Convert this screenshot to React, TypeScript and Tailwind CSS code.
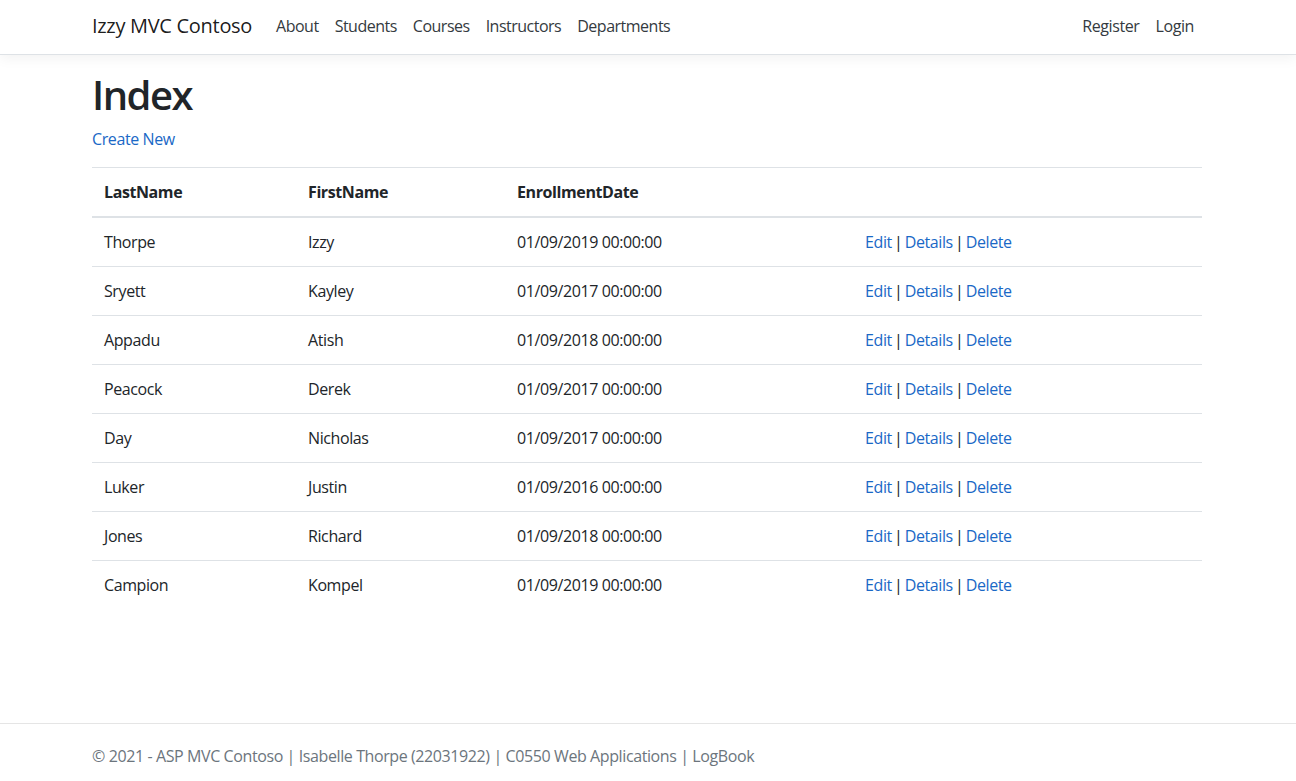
const students = [
  { last: "Thorpe", first: "Izzy", date: "01/09/2019 00:00:00" },
  { last: "Sryett", first: "Kayley", date: "01/09/2017 00:00:00" },
  { last: "Appadu", first: "Atish", date: "01/09/2018 00:00:00" },
  { last: "Peacock", first: "Derek", date: "01/09/2017 00:00:00" },
  { last: "Day", first: "Nicholas", date: "01/09/2017 00:00:00" },
  { last: "Luker", first: "Justin", date: "01/09/2016 00:00:00" },
  { last: "Jones", first: "Richard", date: "01/09/2018 00:00:00" },
  { last: "Campion", first: "Kompel", date: "01/09/2019 00:00:00" },
];

const navLinks = ["About", "Students", "Courses", "Instructors", "Departments"];

export default function App() {
  return (
    <div
      className="min-h-screen flex flex-col bg-white text-[#212529] text-[16px] leading-6 tracking-[-0.4px]"
      style={{ fontFamily: '"Open Sans", "Noto Sans", sans-serif' }}
    >
      <header className="h-[55px] border-b border-[#dee2e6] bg-white shadow-[0_4px_12px_rgba(0,0,0,0.05)]">
        <div className="w-[1112px] pr-[2px] mx-auto h-full flex items-center pb-0.5">
          <a className="text-[20px] text-black/90 mr-4 tracking-[-0.3px]">Izzy MVC Contoso</a>
          <nav className="flex flex-1">
            {navLinks.map((l) => (
              <a key={l} className="px-2 text-[#343a40] tracking-[-0.5px]">{l}</a>
            ))}
          </nav>
          <nav className="flex">
            <a className="px-2 text-[#343a40]">Register</a>
            <a className="px-2 text-[#343a40]">Login</a>
          </nav>
        </div>
      </header>

      <main className="flex-1 w-[1112px] pr-[2px] mx-auto mt-4">
        <h1 className="text-[40px] leading-[48px] font-semibold mb-2 tracking-[-1.5px]">Index</h1>
        <p className="mb-4">
          <a className="text-[#1a68c6]">Create New</a>
        </p>
        <table className="w-[1110px] border-collapse">
          <thead>
            <tr className="text-left">
              <th className="w-[204px] px-3 py-3 font-bold border-t border-[#dee2e6] border-b-2">LastName</th>
              <th className="w-[209px] px-3 py-3 font-bold border-t border-[#dee2e6] border-b-2">FirstName</th>
              <th className="w-[348px] px-3 py-3 font-bold border-t border-[#dee2e6] border-b-2">EnrollmentDate</th>
              <th className="px-3 py-3 border-t border-[#dee2e6] border-b-2"></th>
            </tr>
          </thead>
          <tbody>
            {students.map((s, i) => (
              <tr key={i} className="border-t border-[#dee2e6] first:border-t-0">
                <td className="px-3 py-3">{s.last}</td>
                <td className="px-3 py-3">{s.first}</td>
                <td className="px-3 py-3">{s.date}</td>
                <td className="px-3 py-3 [word-spacing:-1.5px]">
                  <a className="text-[#1a68c6]">Edit</a> |{" "}
                  <a className="text-[#1a68c6]">Details</a> |{" "}
                  <a className="text-[#1a68c6]">Delete</a>
                </td>
              </tr>
            ))}
          </tbody>
        </table>
      </main>

      <footer className="h-[58px] border-t border-[#e5e5e5] text-[#6c757d]">
        <div className="w-[1112px] pr-[2px] mx-auto pt-5">
          © 2021 - ASP MVC Contoso | Isabelle Thorpe (22031922) | C0550 Web Applications | LogBook
        </div>
      </footer>
    </div>
  );
}
